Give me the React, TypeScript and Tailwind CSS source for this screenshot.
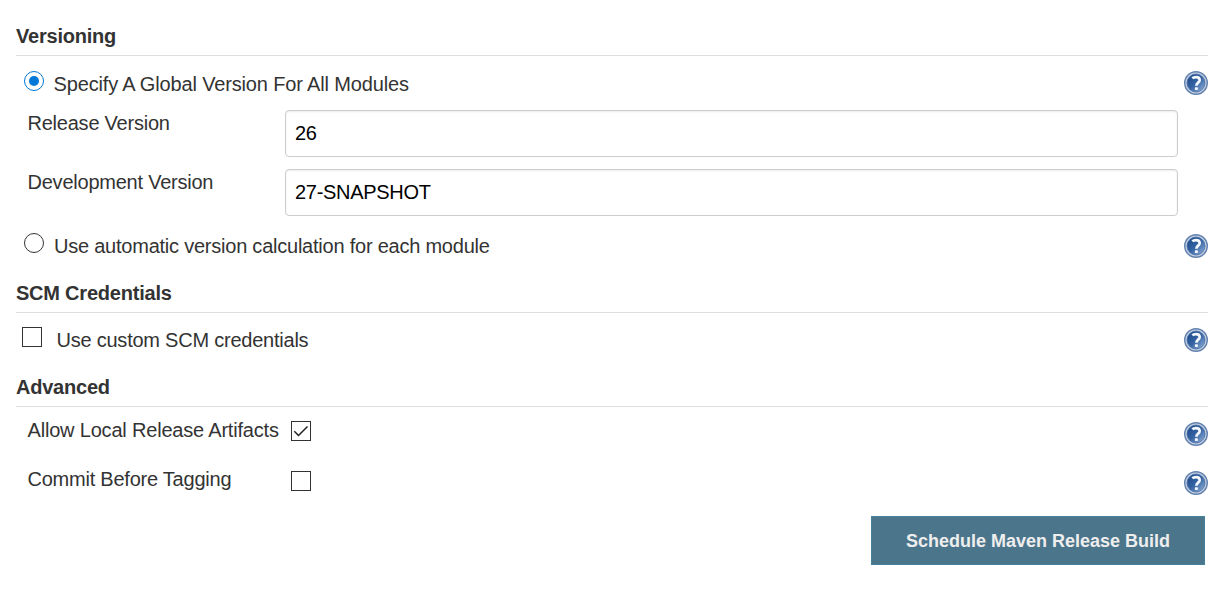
import React, { useState } from "react";

function HelpIcon({ id }: { id: string }) {
  return (
    <svg className="block size-6 shrink-0" viewBox="0 0 24 24" aria-hidden="true">
      <defs>
        <linearGradient id={id} x1="0" y1="0" x2="1" y2="1">
          <stop offset="0.1" stopColor="#1d4a8d" />
          <stop offset="0.5" stopColor="#3563a3" />
          <stop offset="0.95" stopColor="#8fb0d8" />
        </linearGradient>
      </defs>
      <circle cx="12" cy="12" r="11.3" fill="#c3d0e2" stroke="#6482af" strokeWidth="1.4" />
      <circle cx="12" cy="12" r="9" fill={`url(#${id})`} stroke="#4a6da3" strokeWidth="0.8" />
      <path
        d="M8.300 7.300C9.200 6.500 10.500 6.100 12 6.100c2.300 0 3.700 1 3.700 2.900 0 2.700-3.300 2.600-3.300 5.700"
        fill="none"
        stroke="#f4f7fb"
        strokeWidth="2.700"
      />
      <rect x="10.900" y="16.200" width="3" height="2.800" rx="0.700" fill="#f4f7fb" />
    </svg>
  );
}

function Heading({ children }: { children: React.ReactNode }) {
  return (
    <h2 className="h-[33px] border-b border-[#dfdfdf] text-[20px] leading-[26px] font-bold tracking-[-0.22px]">
      {children}
    </h2>
  );
}

function Radio({ checked, onChange }: { checked: boolean; onChange: () => void }) {
  return (
    <span className="grid size-5 shrink-0">
      <input
        type="radio"
        name="versioning"
        checked={checked}
        onChange={onChange}
        className="col-start-1 row-start-1 size-5 appearance-none rounded-full border border-[#333] bg-white checked:border-[#0078d7]"
      />
      {checked && (
        <span className="pointer-events-none col-start-1 row-start-1 size-[10px] place-self-center rounded-full bg-[#0078d7]" />
      )}
    </span>
  );
}

function Checkbox({ initial = false }: { initial?: boolean }) {
  const [on, setOn] = useState(initial);
  return (
    <span className="grid size-5 shrink-0">
      <input
        type="checkbox"
        checked={on}
        onChange={() => setOn(!on)}
        className="col-start-1 row-start-1 size-5 appearance-none border border-[#333] bg-white"
      />
      {on && (
        <svg className="pointer-events-none col-start-1 row-start-1 size-5" viewBox="0 0 20 20">
          <path d="M3.300 10.300L7.500 14.500L16.500 5.500" fill="none" stroke="#222" strokeWidth="1.500" />
        </svg>
      )}
    </span>
  );
}

function Field({ label, value }: { label: string; value: string }) {
  return (
    <label className="flex h-[47px] items-start pr-[30px] pl-[11.5px]">
      <span className="w-[257.5px] shrink-0">{label}</span>
      <input
        defaultValue={value}
        className="h-[47px] min-w-0 flex-1 rounded-[4px] border border-[#ccc] bg-white px-[9px] tracking-[-0.3px] text-black shadow-[inset_0_1px_2px_rgba(0,0,0,0.08)] outline-none"
      />
    </label>
  );
}

export default function App() {
  const [mode, setMode] = useState("global");
  return (
    <form className="h-[607px] bg-white pt-[23px] pr-[15px] pl-4 font-['Liberation_Sans',Arial,sans-serif] text-[20px] leading-[26px] tracking-[-0.23px] text-[#333]">
      <Heading>Versioning</Heading>
      <div className="flex items-start pt-[15px] pl-2">
        <Radio checked={mode === "global"} onChange={() => setMode("global")} />
        <span className="flex-1 pl-[9.5px] tracking-[-0.15px]">Specify A Global Version For All Modules</span>
        <HelpIcon id="help-global" />
      </div>
      <div className="mt-[13px] flex flex-col gap-3">
        <Field label="Release Version" value="26" />
        <Field label="Development Version" value="27-SNAPSHOT" />
      </div>
      <div className="flex h-[64px] items-start pt-[17px] pl-2">
        <Radio checked={mode === "auto"} onChange={() => setMode("auto")} />
        <span className="flex-1 pl-[10px]">Use automatic version calculation for each module</span>
        <div className="pt-px">
          <HelpIcon id="help-auto" />
        </div>
      </div>
      <Heading>SCM Credentials</Heading>
      <div className="flex h-[61px] items-start pt-[14px] pl-[6px]">
        <Checkbox />
        <span className="flex-1 pl-[14.5px]">Use custom SCM credentials</span>
        <div className="pt-px">
          <HelpIcon id="help-scm" />
        </div>
      </div>
      <Heading>Advanced</Heading>
      <div className="flex h-[50px] items-start pt-[10px] pl-[11.5px]">
        <span className="w-[263.5px] tracking-[-0.19px]">Allow Local Release Artifacts</span>
        <div className="pt-1">
          <Checkbox initial />
        </div>
        <span className="flex-1" />
        <div className="pt-[5px]">
          <HelpIcon id="help-local" />
        </div>
      </div>
      <div className="flex h-[59px] items-start pt-[9px] pl-[11.5px]">
        <span className="w-[263.5px]">Commit Before Tagging</span>
        <div className="pt-[5px]">
          <Checkbox />
        </div>
        <span className="flex-1" />
        <div className="pt-[5px]">
          <HelpIcon id="help-commit" />
        </div>
      </div>
      <div className="flex justify-end pr-[3px]">
        <button
          type="button"
          className="h-[49px] w-[334px] border border-[#45809c] bg-[#4b758b] text-[18px] font-bold tracking-normal text-[#eee]"
        >
          Schedule Maven Release Build
        </button>
      </div>
    </form>
  );
}
